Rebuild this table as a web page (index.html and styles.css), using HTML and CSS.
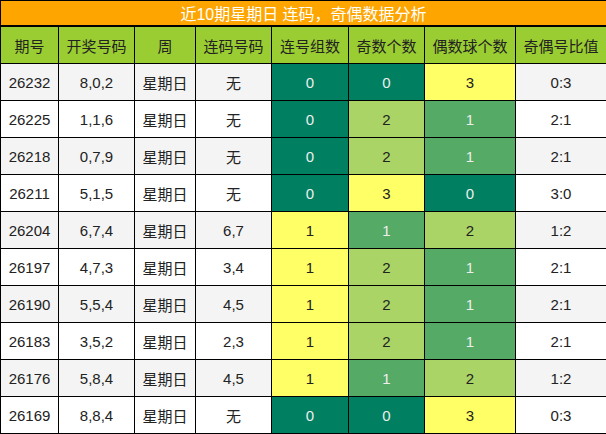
FILE: index.html
```html
<!DOCTYPE html>
<html lang="zh">
<head>
<meta charset="utf-8">
<link rel="stylesheet" href="styles.css">
</head>
<body>
<table class="tbl">
<colgroup>
<col class="c1"><col class="c2"><col class="c3"><col class="c4"><col class="c5"><col class="c6"><col class="c7"><col class="c8">
</colgroup>
<thead>
<tr class="title"><th colspan="8">近10期星期日 连码，奇偶数据分析</th></tr>
<tr class="head"><th>期号</th><th>开奖号码</th><th>周</th><th>连码号码</th><th>连号组数</th><th>奇数个数</th><th>偶数球个数</th><th>奇偶号比值</th></tr>
</thead>
<tbody>
<tr class="alt"><td>26232</td><td>8,0,2</td><td>星期日</td><td>无</td><td class="dk">0</td><td class="dk">0</td><td class="yl">3</td><td>0:3</td></tr>
<tr><td>26225</td><td>1,1,6</td><td>星期日</td><td>无</td><td class="dk">0</td><td class="lt">2</td><td class="md">1</td><td>2:1</td></tr>
<tr class="alt"><td>26218</td><td>0,7,9</td><td>星期日</td><td>无</td><td class="dk">0</td><td class="lt">2</td><td class="md">1</td><td>2:1</td></tr>
<tr><td>26211</td><td>5,1,5</td><td>星期日</td><td>无</td><td class="dk">0</td><td class="yl">3</td><td class="dk">0</td><td>3:0</td></tr>
<tr class="alt"><td>26204</td><td>6,7,4</td><td>星期日</td><td>6,7</td><td class="yl">1</td><td class="md">1</td><td class="lt">2</td><td>1:2</td></tr>
<tr><td>26197</td><td>4,7,3</td><td>星期日</td><td>3,4</td><td class="yl">1</td><td class="lt">2</td><td class="md">1</td><td>2:1</td></tr>
<tr class="alt"><td>26190</td><td>5,5,4</td><td>星期日</td><td>4,5</td><td class="yl">1</td><td class="lt">2</td><td class="md">1</td><td>2:1</td></tr>
<tr><td>26183</td><td>3,5,2</td><td>星期日</td><td>2,3</td><td class="yl">1</td><td class="lt">2</td><td class="md">1</td><td>2:1</td></tr>
<tr class="alt"><td>26176</td><td>5,8,4</td><td>星期日</td><td>4,5</td><td class="yl">1</td><td class="md">1</td><td class="lt">2</td><td>1:2</td></tr>
<tr><td>26169</td><td>8,8,4</td><td>星期日</td><td>无</td><td class="dk">0</td><td class="dk">0</td><td class="yl">3</td><td>0:3</td></tr>
</tbody>
</table>
</body>
</html>
```

FILE: styles.css
```css
html, body {
  margin: 0;
  padding: 0;
  background: #fff;
}
.tbl {
  width: 606px;
  border-collapse: collapse;
  table-layout: fixed;
  font-family: "Liberation Sans", "Noto Sans CJK SC", sans-serif;
  font-size: 15px;
  color: #222;
}
.c1 { width: 58px; }
.c2 { width: 76px; }
.c3 { width: 61px; }
.c4 { width: 76px; }
.c5 { width: 77px; }
.c6 { width: 76px; }
.c7 { width: 91px; }
.c8 { width: 91px; }
.tbl th, .tbl td {
  border: 1px solid #000;
  text-align: center;
  padding: 0;
  font-weight: normal;
}
.title th {
  background: #ffa500;
  color: #fff;
  font-size: 16px;
  height: 23px;
  border-bottom-width: 2px;
}
.head th {
  background: #9acd32;
  height: 36px;
}
.tbl td {
  height: 36px;
}
.alt td { background: #f4f4f4; }
.tbl td.dk { background: #008060; color: #eee; }
.tbl td.md { background: #55aa66; color: #eee; }
.tbl td.lt { background: #aad466; }
.tbl td.yl { background: #ffff66; }
```
